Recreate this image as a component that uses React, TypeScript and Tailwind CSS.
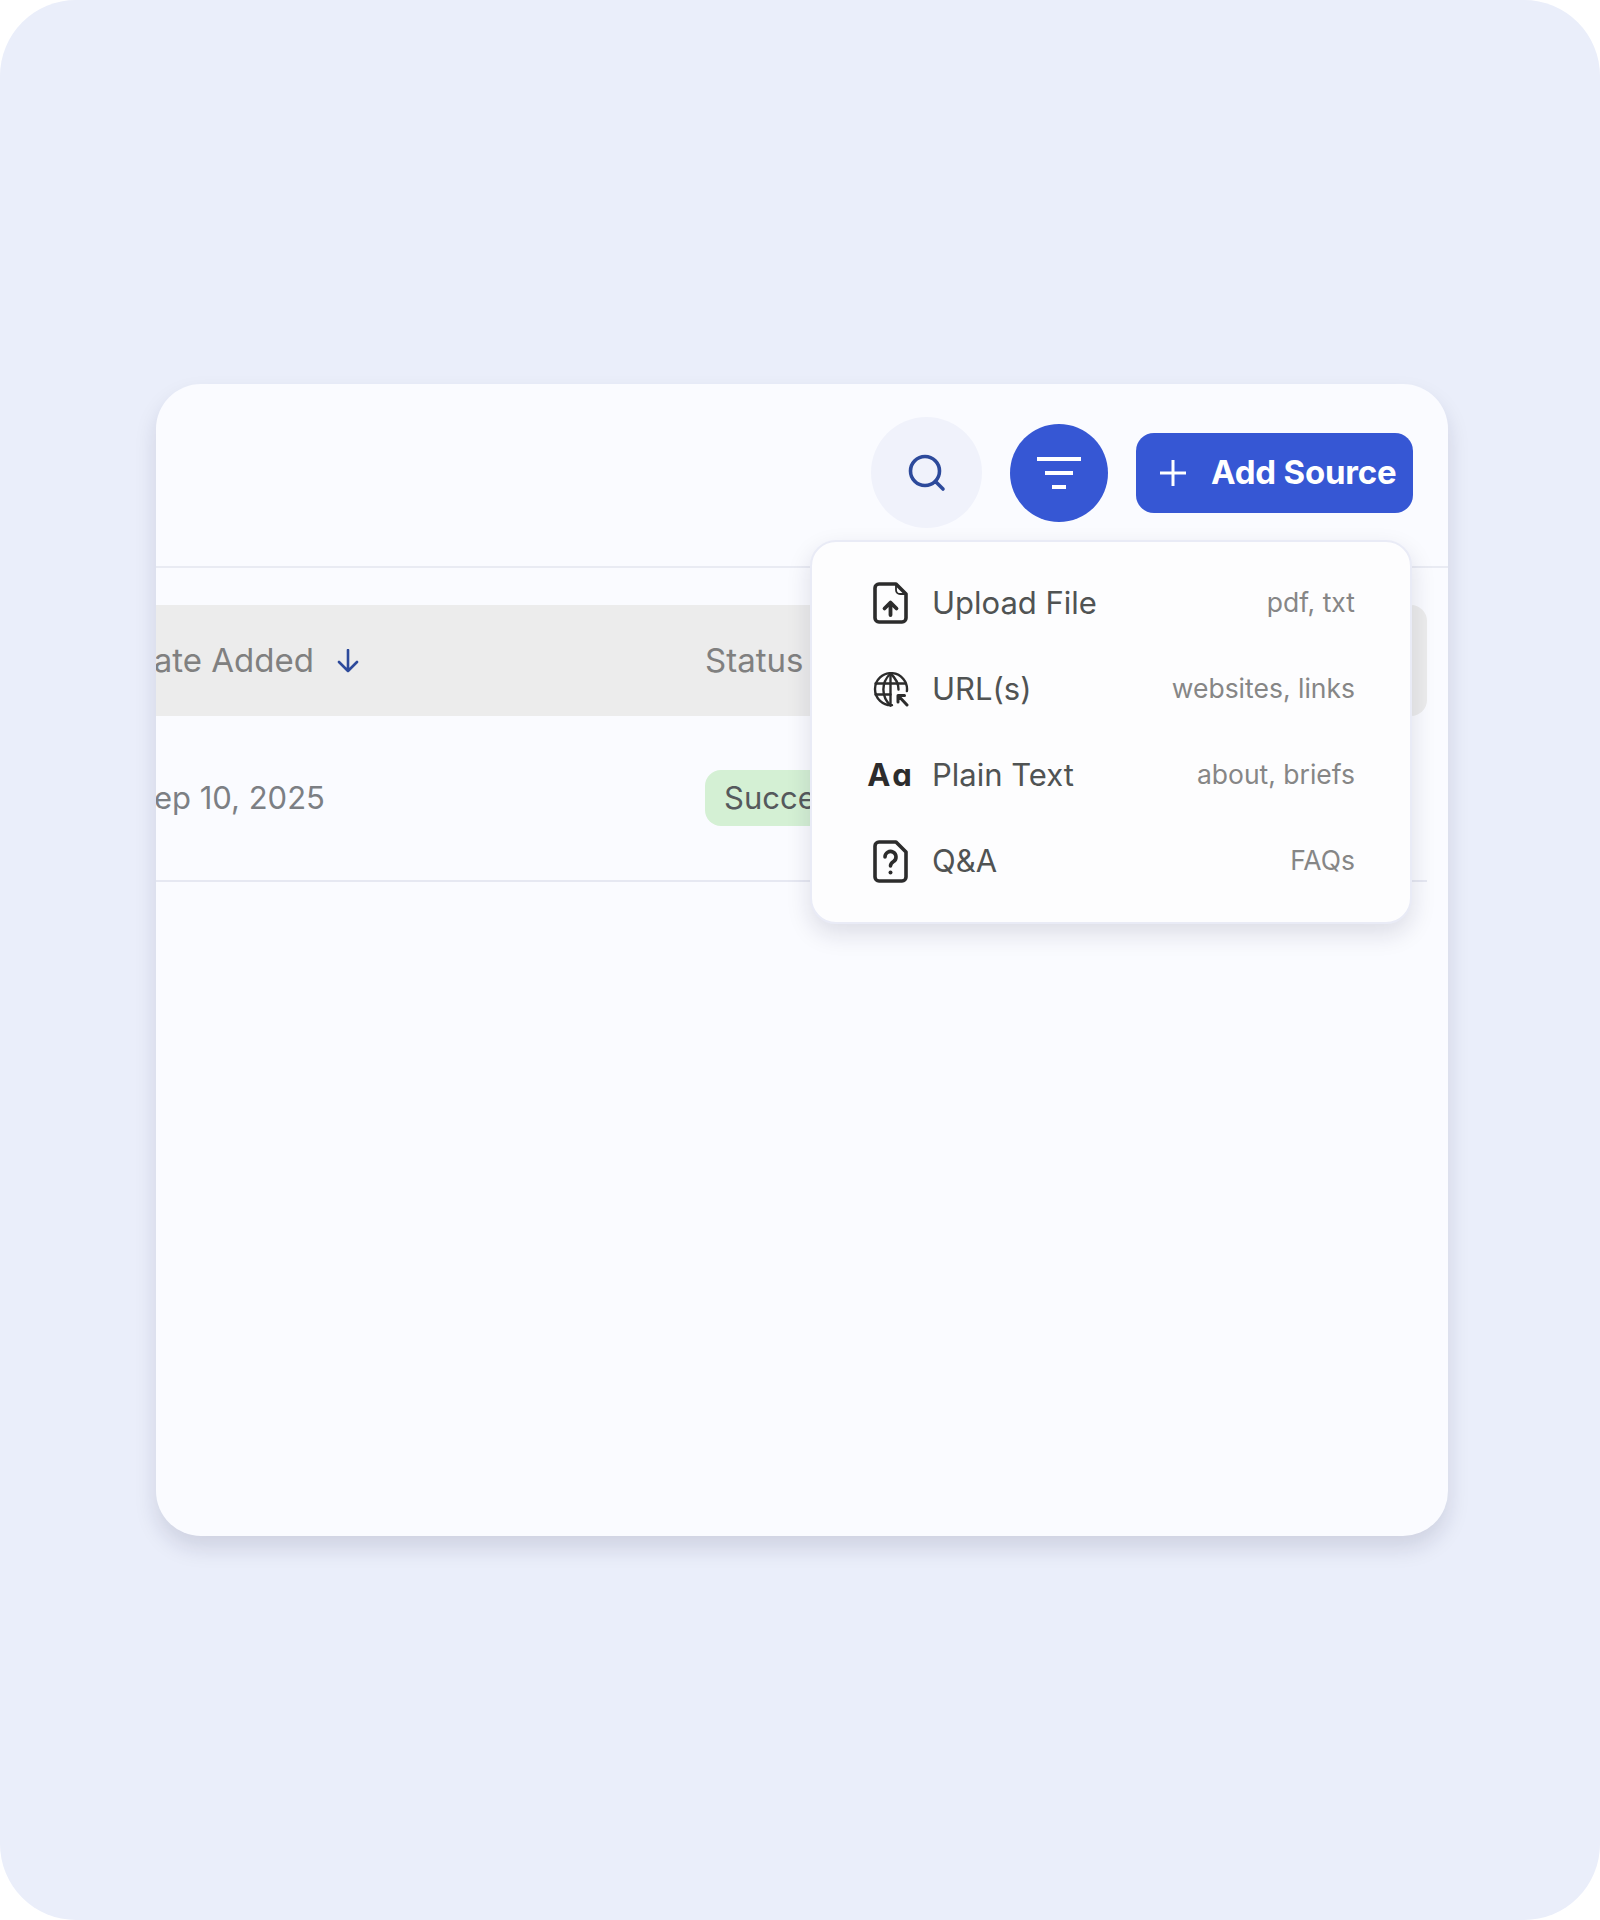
const font = { fontFamily: '"Inter", "Liberation Sans", sans-serif' };

function FileUploadIcon() {
  return (
    <svg width="35" height="42" viewBox="0 0 35 42" fill="none" stroke="#2c2c2c" strokeLinejoin="round" strokeLinecap="round">
      <path d="M6 2H23L33 12V36a4 4 0 0 1-4 4H6a4 4 0 0 1-4-4V6a4 4 0 0 1 4-4Z" strokeWidth="3.6" />
      <path d="M23 2.500V8a4 4 0 0 0 4 4h5.500" strokeWidth="1.8" />
      <path d="M17.500 33V21M11.500 26.500l6-6 6 6" strokeWidth="3.8" />
    </svg>
  );
}

function GlobeIcon() {
  return (
    <svg width="36" height="35" viewBox="0 0 36 35" fill="none" stroke="#2c2c2c" strokeWidth="2.400" strokeLinecap="round" strokeLinejoin="round">
      <path d="M19 33.100a16 16 0 1 1 14.900-14" />
      <path d="M17.500 1.500c-9.500 9-9.500 23 0 32M17.500 1.500c5.500 5 8 11 8 16" />
      <path d="M2.500 11.500h30M2.500 22.500h15" />
      <path d="M17.500 1.500v32" />
      <path d="M25 23.500h6.500M25 23.500V30M25.500 24l8.500 9" strokeWidth="3" />
    </svg>
  );
}

function FileQuestionIcon() {
  return (
    <svg width="35" height="43" viewBox="0 0 35 43" fill="none" stroke="#2c2c2c" strokeLinejoin="round" strokeLinecap="round">
      <path d="M6 2H23L33 12V37a4 4 0 0 1-4 4H6a4 4 0 0 1-4-4V6a4 4 0 0 1 4-4Z" strokeWidth="3.6" />
      <path d="M12 17a5.500 5.500 0 1 1 8.500 4.600c-2 1.300-3 2.400-3 4.400" strokeWidth="3.600" />
      <path d="M17.500 32.500v.1" strokeWidth="4" />
    </svg>
  );
}

function MenuRow({ icon, label, hint }: { icon: React.ReactNode; label: string; hint: string }) {
  return (
    <div className="flex h-[86px] items-center pl-[57px] pr-[55px]">
      <div className="flex w-[43px] justify-center">{icon}</div>
      <span className="ml-[20px] text-[31px] text-[#505353]">{label}</span>
      <span className="ml-auto text-[26.5px] text-[#868686]">{hint}</span>
    </div>
  );
}

export default function App() {
  return (
    <div className="h-[1920px] w-[1600px] rounded-[76px] bg-[#eaeefa] pl-[156px] pt-[384px]" style={font}>
      <div className="relative h-[1152px] w-[1292px] rounded-[45px] bg-[#fafbff] shadow-[0_12px_22px_rgba(20,24,60,0.13)]">
        <div className="h-full overflow-hidden rounded-[45px]">
          <div className="flex h-[184px] items-center justify-end gap-[28px] border-b-2 border-[#e9ebf3] pb-[5px] pr-[35px]">
            <button className="flex h-[111px] w-[111px] items-center justify-center rounded-full bg-[#f0f2fb]">
              <svg width="38" height="38" viewBox="0 0 38 38" fill="none" stroke="#2d4a9b" strokeWidth="3.600" strokeLinecap="round">
                <circle cx="17" cy="17" r="14.500" />
                <path d="M28 28l7 7" />
              </svg>
            </button>
            <button className="flex h-[98px] w-[98px] items-center justify-center rounded-full bg-[#3657d4]">
              <svg width="44" height="34" viewBox="0 0 44 34" fill="none" stroke="#ffffff" strokeWidth="4">
                <path d="M0 3h44M8 17h28M15 31h14" />
              </svg>
            </button>
            <button className="flex h-[80px] w-[277px] items-center rounded-[18px] bg-[#3657d4] pl-[24px]">
              <svg width="26" height="26" viewBox="0 0 26 26" fill="none" stroke="#ffffff" strokeWidth="3">
                <path d="M13 0v26M0 13h26" />
              </svg>
              <span className="ml-[25px] text-[33px] font-bold tracking-[-0.2px] text-white">Add Source</span>
            </button>
          </div>

          <div className="mr-[21px] mt-[37px] flex h-[111px] items-center rounded-r-[16px] bg-[#ececec] text-[33px] text-[#808080]">
            <div className="ml-[-26px] flex w-[575px] items-center gap-[22px]">
              <span>Date Added</span>
              <svg width="24" height="24" viewBox="0 0 24 24" fill="none" stroke="#2d4a9b" strokeWidth="2.600" strokeLinecap="round" strokeLinejoin="round">
                <path d="M12 1v21M3 13l9 9 9-9" />
              </svg>
            </div>
            <span>Status</span>
          </div>

          <div className="mr-[21px] flex h-[166px] items-center border-b-2 border-[#e6e8f2] text-[31px] text-[#7c7f84]">
            <div className="ml-[-22px] w-[571px]">Sep 10, 2025</div>
            <span className="flex h-[56px] items-center rounded-[16px] bg-[#d4f0d4] px-[19px] text-[#55595c]">Success</span>
          </div>
        </div>

        <div className="absolute right-[36px] top-[156px] h-[384px] w-[602px] rounded-[26px] border-2 border-[#e9ebf6] bg-[#fdfdfe] py-[18px] shadow-[0_10px_24px_rgba(20,24,60,0.13)]">
          <MenuRow icon={<FileUploadIcon />} label="Upload File" hint="pdf, txt" />
          <MenuRow icon={<GlobeIcon />} label="URL(s)" hint="websites, links" />
          <MenuRow
            icon={<span className="text-[31px] font-bold tracking-[2px] text-[#2c2c2c]">Aɑ</span>}
            label="Plain Text"
            hint="about, briefs"
          />
          <MenuRow icon={<FileQuestionIcon />} label="Q&A" hint="FAQs" />
        </div>
      </div>
    </div>
  );
}
